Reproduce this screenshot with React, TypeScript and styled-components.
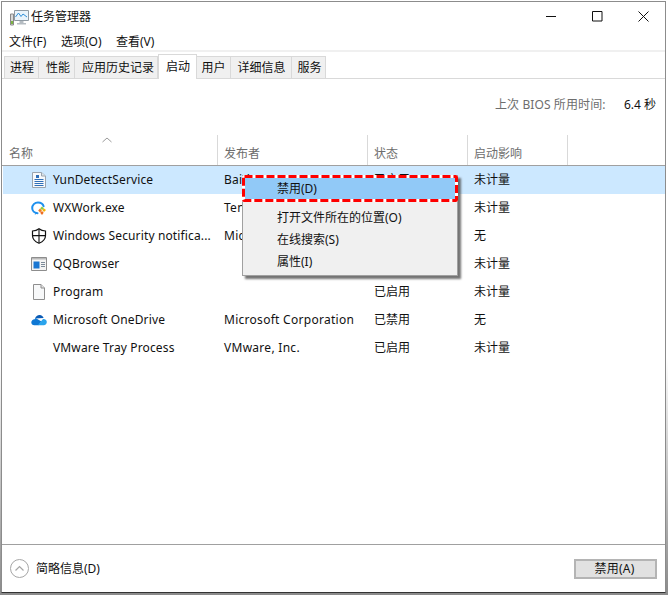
import React from "react";
import styled, { createGlobalStyle } from "styled-components";

const Global = createGlobalStyle`
  html, body { margin: 0; padding: 0; background: #fff; }
  body { width: 668px; height: 595px; overflow: hidden; }
  * { box-sizing: border-box; }
`;

const Desktop = styled.div`
  width: 668px;
  height: 595px;
  padding: 1px 2px 0 1px;
  background: linear-gradient(to bottom, #fff 0, #fff 60%, #8a8a8a 100%);
  font-family: "Noto Sans", "Noto Sans CJK SC", sans-serif;
  font-size: 12px;
  color: #000;
`;

const Window = styled.div`
  position: relative;
  width: 665px;
  height: 592px;
  background: #fff;
  border: 1px solid #8c8c8c;
  border-bottom-color: #333;
  display: flex;
  flex-direction: column;
`;

const TitleBar = styled.div`
  height: 30px;
  display: flex;
  align-items: center;
  padding: 0 0 0 8px;
  gap: 2px;
`;

const TitleText = styled.span`
  flex: 1;
  color: #111;
  line-height: 16px;
`;

const WinButton = styled.button`
  width: 46px;
  height: 30px;
  padding: 0;
  border: 0;
  background: transparent;
  display: flex;
  align-items: center;
  justify-content: center;
  margin-top: -2px;
`;

const WinButtons = styled.div`
  display: flex;
  margin-right: -1px;
`;

const MenuBar = styled.div`
  height: 18px;
  display: flex;
  align-items: center;
  gap: 14.5px;
  padding: 1px 0 0 7px;
  line-height: 16px;
  color: #111;
`;

const TabStrip = styled.div`
  height: 29px;
  border-top: 2px solid #f0f0f0;
  border-bottom: 1px solid #d9d9d9;
  display: flex;
  align-items: flex-end;
  padding-left: 2px;
`;

const Tab = styled.div<{ $active?: boolean; $w: number; $indent: number }>`
  width: ${(p) => p.$w}px;
  height: ${(p) => (p.$active ? 25 : 22)}px;
  margin-bottom: ${(p) => (p.$active ? -1 : 0)}px;
  background: ${(p) => (p.$active ? "#fff" : "#f0f0f0")};
  border: 1px solid #d9d9d9;
  border-left-width: ${(p) => (p.$active ? 1 : 0)}px;
  border-bottom-width: 0;
  display: flex;
  align-items: center;
  justify-content: center;
  color: #111;
  line-height: 16px;
  padding: 0 0 ${(p) => (p.$active ? 1 : 0)}px ${(p) => p.$indent}px;
  &:first-child { border-left-width: 1px; }
`;

const BiosRow = styled.div`
  height: 56px;
  display: flex;
  align-items: center;
  justify-content: flex-end;
  padding: 0 8px 4px 0;
  line-height: 16px;
`;

const BiosLabel = styled.span`
  color: #6d6d6d;
  width: 129px;
  letter-spacing: 0.1px;
`;

const BiosValue = styled.span`
  color: #111;
  width: 33px;
  white-space: nowrap;
`;

const HeaderRow = styled.div`
  height: 31px;
  display: grid;
  grid-template-columns: 216px 150px 100px 100px 1fr;
  border-bottom: 1px solid #a0a0a0;
`;

const HeaderCell = styled.div<{ $first?: boolean; $last?: boolean }>`
  position: relative;
  display: flex;
  align-items: flex-end;
  padding: 0 0 3px ${(p) => (p.$first ? 7 : 6)}px;
  color: #6d6d6d;
  line-height: 16px;
  border-right: ${(p) => (p.$last ? "0" : "1px solid #d9d9d9")};
`;

const SortChevron = styled.svg`
  position: absolute;
  left: 100px;
  top: 2px;
`;

const Rows = styled.div`
  flex: 1;
`;

const Row = styled.div<{ $selected?: boolean }>`
  height: 28px;
  margin-left: 1px;
  display: grid;
  grid-template-columns: 215px 150px 100px 100px 1fr;
  align-items: center;
  background: ${(p) => (p.$selected ? "#cce8ff" : "transparent")};
  color: #111;
  line-height: 16px;
`;

const NameCell = styled.div`
  display: flex;
  align-items: center;
  gap: 6px;
  padding-left: 28px;
  white-space: nowrap;
  letter-spacing: 0.14px;
`;

const IconBox = styled.span`
  width: 16px;
  height: 16px;
  display: block;
  flex: none;
`;

const Cell = styled.div<{ $latin?: boolean }>`
  padding-left: 6px;
  white-space: nowrap;
  letter-spacing: ${(p) => (p.$latin ? "0.28px" : "0")};
`;

const Footer = styled.div`
  height: 48px;
  border-top: 1px solid #a0a0a0;
  display: flex;
  align-items: center;
  padding: 0 8px;
`;

const Collapse = styled.div`
  flex: 1;
  display: flex;
  align-items: center;
  gap: 7px;
  color: #111;
  line-height: 16px;
`;

const FooterButton = styled.button`
  width: 83px;
  height: 20px;
  padding: 0 2px 0 0;
  border: 2px solid #b4b4b4;
  background: #e1e1e1;
  font: inherit;
  color: #111;
  line-height: 16px;
  letter-spacing: 0.2px;
`;

const ContextMenu = styled.div`
  position: absolute;
  left: 240px;
  top: 173px;
  width: 216px;
  height: 101px;
  background: #f0f0f0;
  border: 1px solid #a0a0a0;
  box-shadow: 3px 3px 2px rgba(70, 70, 70, 0.75);
  padding: 1px;
  color: #111;
`;

const MenuItem = styled.div<{ $hot?: boolean; $h: number }>`
  height: ${(p) => p.$h}px;
  padding-left: 33px;
  display: flex;
  align-items: center;
  line-height: 16px;
  background: ${(p) => (p.$hot ? "#91c9f7" : "transparent")};
`;

const MenuGap = styled.div`
  height: 6px;
`;

const Annotation = styled.svg`
  position: absolute;
  left: 240px;
  top: 173px;
`;

const DocIcon = () => (
  <svg width="16" height="16" viewBox="0 0 16 16">
    <path d="M1.500.5h9l4 3.500v11.500h-13z" fill="#f7f9fb" stroke="#9aa4ae" />
    <path d="M10.500.5v3.500h4" fill="#dfe5ea" stroke="#9aa4ae" />
    <path d="M5 3h3v3H5z" fill="#2f6fb8" />
    <path d="M3.500 7.500h9M3.500 9.500h9M3.500 11.500h9M3.500 13.500h9" stroke="#2f6fb8" />
  </svg>
);

const WxIcon = () => (
  <svg width="16" height="16" viewBox="0 0 16 16">
    <path d="M6.500 13.200C3.300 13 1.200 10.800 1.200 8S3.600 2.400 7 2.400c2.800 0 5 1.600 5.600 3.800" fill="none" stroke="#1e90ee" strokeWidth="2" strokeLinecap="round" />
    <path d="M4.500 12.800l-.8 2 2.600-1.400z" fill="#1e90ee" />
    <path d="M11 6.500l2 2-2 1.600-1.800-1.800z" fill="#8ccb3f" />
    <path d="M13 8.600l2 1.500-2 2-1.600-2z" fill="#f4b400" />
    <path d="M9 8.600l1.900 1.900L9 12.400 7.200 10.500z" fill="#f07c22" />
    <path d="M11 11l1.700 1.700L11 15l-1.800-2.200z" fill="#ee6c1f" />
  </svg>
);

const ShieldIcon = () => (
  <svg width="16" height="16" viewBox="0 0 16 16">
    <path d="M8 .8c1.800 1.400 3.900 2.100 6.500 2.200v4.400c0 3.500-2.400 6.100-6.500 7.900-4.100-1.800-6.500-4.400-6.500-7.900V3C4.100 2.900 6.200 2.200 8 .8z" fill="#fff" stroke="#111" strokeWidth="1.200" />
    <path d="M8 1v14M1.700 7.600h12.600" stroke="#111" strokeWidth="1.100" />
  </svg>
);

const QQIcon = () => (
  <svg width="16" height="16" viewBox="0 0 16 16">
    <path d="M.5 1.500h15v13H.5z" fill="#f4f4f4" stroke="#8d8d8d" />
    <path d="M1 2h14v1.500H1z" fill="#b9b9b9" />
    <path d="M2.500 5.500h6v7h-6z" fill="#1976d2" />
    <path d="M10 6.500h4M10 8.500h4M10 10.500h4" stroke="#7d8b99" />
  </svg>
);

const FileIcon = () => (
  <svg width="16" height="16" viewBox="0 0 16 16">
    <path d="M2.500.5h7.500l3.500 3.500v11.500h-11z" fill="#f7f8f9" stroke="#8e8e8e" />
    <path d="M10 .5V4h3.500" fill="#e4e4e4" stroke="#8e8e8e" />
  </svg>
);

const CloudIcon = () => (
  <svg width="16" height="16" viewBox="0 0 16 16">
    <path d="M4 6.500C4.800 4 6.800 2.800 8.800 3c1.800.2 3.200 1.200 3.800 3z" fill="#0a5bb5" />
    <path d="M3.300 13.200C1.500 13.200.3 12 .3 10.500c0-1.800 1.500-3.200 3.300-3.200L4.500 6l6 3.500-3 3.700z" fill="#0f78d4" />
    <path d="M7 13.200l3.700-4.600c.6-1.300 1.500-1.900 2.300-1.600 1.700.3 2.800 1.500 2.800 3 0 1.800-1.300 3.200-3 3.200z" fill="#2aa4ec" />
  </svg>
);

const rows: { icon?: React.ReactNode; name: string; pub: string; status: string; impact: string; selected?: boolean }[] = [
  { icon: <DocIcon />, name: "YunDetectService", pub: "Baidu", status: "已启用", impact: "未计量", selected: true },
  { icon: <WxIcon />, name: "WXWork.exe", pub: "Tencent", status: "已启用", impact: "未计量" },
  { icon: <ShieldIcon />, name: "Windows Security notifica...", pub: "Microsoft Corporation", status: "已启用", impact: "无" },
  { icon: <QQIcon />, name: "QQBrowser", pub: "", status: "已启用", impact: "未计量" },
  { icon: <FileIcon />, name: "Program", pub: "", status: "已启用", impact: "未计量" },
  { icon: <CloudIcon />, name: "Microsoft OneDrive", pub: "Microsoft Corporation", status: "已禁用", impact: "无" },
  { name: "VMware Tray Process", pub: "VMware, Inc.", status: "已启用", impact: "未计量" },
];

const tabs: [string, number, number][] = [
  ["进程", 35, 1], ["性能", 36, 3], ["应用历史记录", 83, 4], ["启动", 39, 1], ["用户", 34, 0], ["详细信息", 61, 1], ["服务", 34, 2],
];

export default function App() {
  return (
    <Desktop>
      <Global />
      <Window>
        <TitleBar>
          <svg width="19" height="18" viewBox="0 0 19 18">
            <path d="M.5 6h3v11h-3z" fill="#d8d8d8" stroke="#8a8a8a" />
            <path d="M1 13h2v3H1z" fill="#7cb342" />
            <path d="M4.500 2.500h14v10h-14z" fill="#eaf4fb" stroke="#8f9aa3" />
            <path d="M5.500 9l3-4 2.500 3.500 2-2.500 4 3" fill="none" stroke="#2f8fd8" />
            <path d="M9.500 13h4v2h2.500v1.500H7V15h2.500z" fill="#b5bcc2" />
          </svg>
          <TitleText>任务管理器</TitleText>
          <WinButtons>
            <WinButton>
              <svg width="11" height="11" viewBox="0 0 11 11"><path d="M0 5.500h10" stroke="#111" /></svg>
            </WinButton>
            <WinButton>
              <svg width="11" height="11" viewBox="0 0 11 11"><path d="M.5.500h9.500v9.500H.5z" fill="none" stroke="#111" /></svg>
            </WinButton>
            <WinButton>
              <svg width="11" height="11" viewBox="0 0 11 11"><path d="M.5.500l10 10M10.500.500l-10 10" stroke="#111" /></svg>
            </WinButton>
          </WinButtons>
        </TitleBar>
        <MenuBar>
          <span>文件(F)</span>
          <span>选项(O)</span>
          <span>查看(V)</span>
        </MenuBar>
        <TabStrip>
          {tabs.map(([t, w, i]) => (
            <Tab key={t} $w={w} $indent={i} $active={t === "启动"}>{t}</Tab>
          ))}
        </TabStrip>
        <BiosRow>
          <BiosLabel>上次 BIOS 所用时间:</BiosLabel>
          <BiosValue>6.4 秒</BiosValue>
        </BiosRow>
        <HeaderRow>
          <HeaderCell $first>
            名称
            <SortChevron width="10" height="6" viewBox="0 0 10 6">
              <path d="M.5 5L5 1l4.500 4" fill="none" stroke="#9a9a9a" />
            </SortChevron>
          </HeaderCell>
          <HeaderCell>发布者</HeaderCell>
          <HeaderCell>状态</HeaderCell>
          <HeaderCell>启动影响</HeaderCell>
          <HeaderCell $last />
        </HeaderRow>
        <Rows>
          {rows.map((r) => (
            <Row key={r.name} $selected={r.selected}>
              <NameCell>
                <IconBox>{r.icon}</IconBox>
                {r.name}
              </NameCell>
              <Cell $latin>{r.pub}</Cell>
              <Cell>{r.status}</Cell>
              <Cell>{r.impact}</Cell>
            </Row>
          ))}
        </Rows>
        <Footer>
          <Collapse>
            <svg width="19" height="19" viewBox="0 0 19 19">
              <circle cx="9.500" cy="9.500" r="9" fill="#fff" stroke="#a6a6a6" />
              <path d="M5.500 11.500l4-4 4 4" fill="none" stroke="#a6a6a6" strokeWidth="1.200" />
            </svg>
            简略信息(D)
          </Collapse>
          <FooterButton>禁用(A)</FooterButton>
        </Footer>
        <ContextMenu>
          <MenuItem $hot $h={24}>禁用(D)</MenuItem>
          <MenuGap />
          <MenuItem $h={22}>打开文件所在的位置(O)</MenuItem>
          <MenuItem $h={22}>在线搜索(S)</MenuItem>
          <MenuItem $h={22}>属性(I)</MenuItem>
        </ContextMenu>
        <Annotation width="216" height="27" viewBox="0 0 216 27">
          <rect x="1.500" y="1.500" width="213" height="24" rx="1" fill="none" stroke="#fff" strokeWidth="3" />
          <rect x="1.500" y="1.500" width="213" height="24" rx="1" fill="none" stroke="#fe0000" strokeWidth="3" strokeDasharray="8 3" />
        </Annotation>
      </Window>
    </Desktop>
  );
}
